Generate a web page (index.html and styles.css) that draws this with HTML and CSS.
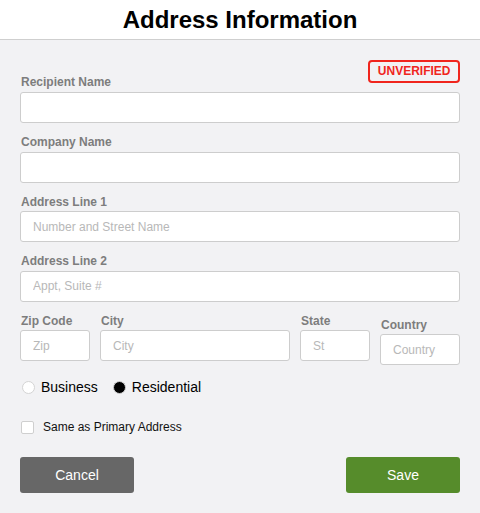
FILE: index.html
```html
<!DOCTYPE html>
<html>
<head>
<meta charset="utf-8">
<link rel="stylesheet" href="styles.css">
</head>
<body>
<header class="header"><h1 class="title">Address Information</h1></header>
<form class="form">
  <div class="field">
    <div class="label-row">
      <label class="label">Recipient Name</label>
      <span class="badge">UNVERIFIED</span>
    </div>
    <input class="input" type="text">
  </div>
  <div class="field">
    <label class="label">Company Name</label>
    <input class="input" type="text">
  </div>
  <div class="field">
    <label class="label">Address Line 1</label>
    <input class="input" type="text" placeholder="Number and Street Name">
  </div>
  <div class="field">
    <label class="label">Address Line 2</label>
    <input class="input" type="text" placeholder="Appt, Suite #">
  </div>
  <div class="row">
    <div class="col col-zip">
      <label class="label">Zip Code</label>
      <input class="input" type="text" placeholder="Zip">
    </div>
    <div class="col col-city">
      <label class="label">City</label>
      <input class="input" type="text" placeholder="City">
    </div>
    <div class="col col-state">
      <label class="label">State</label>
      <input class="input" type="text" placeholder="St">
    </div>
    <div class="col col-country">
      <label class="label">Country</label>
      <input class="input" type="text" placeholder="Country">
    </div>
  </div>
  <div class="radios">
    <label class="radio"><span class="dot"></span>Business</label>
    <label class="radio"><span class="dot dot-on"></span>Residential</label>
  </div>
  <label class="check"><span class="box"></span>Same as Primary Address</label>
  <div class="buttons">
    <button type="button" class="btn btn-cancel">Cancel</button>
    <button type="button" class="btn btn-save">Save</button>
  </div>
</form>
</body>
</html>
```
FILE: styles.css
```css
* { box-sizing: border-box; }
body {
  margin: 0;
  background: #f2f2f4;
  font-family: "Liberation Sans", Arial, Helvetica, sans-serif;
}
.header {
  background: #fff;
  height: 40px;
  border-bottom: 1px solid #cfcfcf;
}
.title {
  margin: 0;
  text-align: center;
  font-size: 24px;
  font-weight: bold;
  line-height: 39px;
  color: #000;
}
.form {
  padding: 20px 20px 0;
  display: flex;
  flex-direction: column;
}
.field { margin-bottom: 12px; }
.label-row {
  display: flex;
  justify-content: space-between;
  align-items: flex-end;
  margin-bottom: 2px;
}
.label-row .label { margin-bottom: 0; }
.label {
  display: block;
  font-size: 12px;
  font-weight: bold;
  line-height: 13.6px;
  color: #7d7d7d;
  padding-top: 1px;
  margin-bottom: 2px;
  padding-left: 1px;
}
.badge {
  display: block;
  height: 23px;
  border: 2px solid #f0251d;
  border-radius: 4px;
  padding: 0 7.5px;
  font-size: 12px;
  font-weight: bold;
  line-height: 19px;
  color: #f0251d;
  margin-bottom: 7px;
}
.input {
  display: block;
  width: 100%;
  height: 31px;
  border: 1px solid #cdcdcd;
  border-radius: 3px;
  background: #fff;
  padding: 0 12px;
  font-family: inherit;
  font-size: 12px;
  color: #333;
  outline: none;
}
.input::placeholder { color: #b8b8b8; }
.row {
  display: flex;
  gap: 10px;
  align-items: flex-start;
}
.col-zip { width: 70px; }
.col-city { width: 190px; }
.col-state { width: 70px; }
.col-country { width: 80px; margin-top: 4px; }
.radios {
  display: flex;
  align-items: center;
  margin-top: 14px;
  gap: 15px;
  padding-left: 2px;
}
.radio {
  display: flex;
  align-items: center;
  font-size: 14px;
  line-height: 16px;
  color: #000;
}
.dot {
  width: 13px;
  height: 13px;
  border-radius: 50%;
  border: 1px solid #d4d4d4;
  background: #fff;
  margin-right: 6px;
}
.dot-on {
  background: #000;
  border: 1.5px solid #d0d0d0;
}
.check {
  display: flex;
  align-items: center;
  margin-top: 25px;
  padding-left: 1px;
  font-size: 12px;
  line-height: 14px;
  color: #111;
}
.box {
  width: 13px;
  height: 13px;
  border: 1px solid #cfcfcf;
  border-radius: 2px;
  background: #fff;
  margin-right: 9px;
}
.buttons {
  display: flex;
  justify-content: space-between;
  margin-top: 23px;
}
.btn {
  width: 114px;
  height: 36px;
  border: none;
  border-radius: 3px;
  color: #fff;
  font-family: inherit;
  font-size: 14px;
  padding: 0;
}
.btn-cancel { background: #676767; }
.btn-save { background: #568c2b; }
```
